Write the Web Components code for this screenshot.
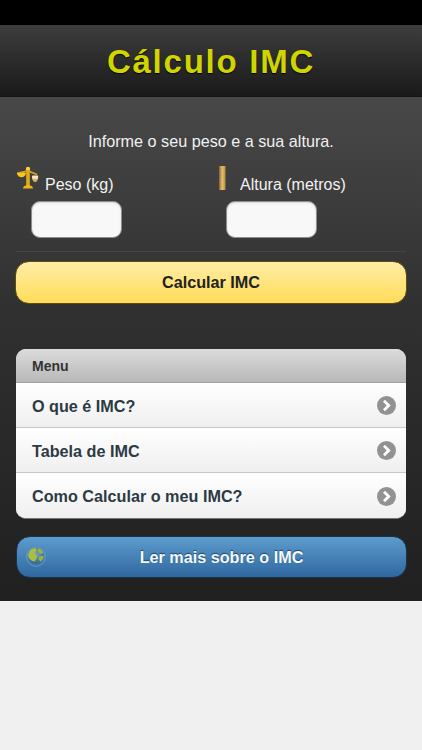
<!DOCTYPE html>
<html lang="pt">
<head>
<meta charset="utf-8">
<title>Cálculo IMC</title>
<style>
html, body { margin: 0; padding: 0; background: #f0f0f0; }
body { font-family: "Liberation Sans", Arial, sans-serif; width: 422px; height: 750px; overflow: hidden; }
</style>
</head>
<body>

<imc-app>
  <imc-header>Cálculo IMC</imc-header>
  <imc-intro>Informe o seu peso e a sua altura.</imc-intro>
  <imc-fields>
    <imc-field label="Peso (kg)">
      <svg slot="icon" width="24" height="24" viewBox="0 0 24 24" style="margin:-1px 0 0 -1px">
        <path d="M13 2.500v18" stroke="#e0ad18" stroke-width="3.600" fill="none"/>
        <circle cx="13" cy="3" r="2.200" fill="#f6d23e"/>
        <path d="M2 7.500 13 5l9 3.500" stroke="#d9a516" stroke-width="1.800" fill="none"/>
        <path d="M8 22.500c0-2.200 2-3.200 5-3.200s5 1 5 3.200z" fill="#eab716"/>
        <path d="M2 7h9c-.4 3-2.500 4.200-4.500 4.200S2.400 10 2 7z" fill="#f5c81c"/>
        <path d="M17 10h6.200c.2 3.600-1.200 6-3.100 6S16.800 13.600 17 10z" fill="#d8b45a"/>
        <path d="M17.200 9.500h5.800v3.200h-5.800z" fill="#f2e8d0"/>
      </svg>
    </imc-field>
    <imc-field label="Altura (metros)">
      <svg slot="icon" width="7" height="24" viewBox="0 0 7 24" style="margin:-1px 0 0 8px">
        <defs><linearGradient id="r" x1="0" x2="1" y1="0" y2="0"><stop offset="0" stop-color="#b4853a"/><stop offset=".5" stop-color="#e2bd73"/><stop offset="1" stop-color="#b98a3c"/></linearGradient></defs>
        <rect x=".3" y="0" width="6.200" height="24" fill="url(#r)"/>
        <path d="M.3 3h2M.3 6h2M.3 9h2M.3 12h2M.3 15h2M.3 18h2M.3 21h2" stroke="#8c6224" stroke-width=".5"/>
      </svg>
    </imc-field>
  </imc-fields>
  <imc-rule></imc-rule>
  <imc-button kind="yellow">Calcular IMC</imc-button>
  <imc-menu title="Menu">
    <imc-menu-item>O que é IMC?</imc-menu-item>
    <imc-menu-item>Tabela de IMC</imc-menu-item>
    <imc-menu-item>Como Calcular o meu IMC?</imc-menu-item>
  </imc-menu>
  <imc-button kind="blue">
    <svg slot="icon" width="20" height="20" viewBox="0 0 20 20">
      <defs><radialGradient id="g" cx=".5" cy=".4" r=".65"><stop offset="0" stop-color="#7ba3bd"/><stop offset="1" stop-color="#2f6288"/></radialGradient></defs>
      <circle cx="10" cy="10" r="9.300" fill="none" stroke="#8dbce0" stroke-opacity=".6" stroke-width=".8"/>
      <circle cx="10" cy="8.800" r="8" fill="url(#g)"/>
      <path d="M2.200 7.500C3 3.500 6 1 9.500 .9l1.300 2.400-2 2 .8 2.700 1.600 1-1.200 3.300-1.500 2.300C5 14 1.800 11 2.200 7.500z" fill="#a9bf3e"/>
      <path d="M12 1.300c2.300.5 4.300 2.200 5.200 4.500l-2 1.200-2-1-1.700-2.700zM13 9.500l4.800-.7c0 2.400-1.200 4.700-3.300 6l-1.800-2.300z" fill="#9bb53a"/>
    </svg>
    Ler mais sobre o IMC
  </imc-button>
</imc-app>

<script>
function component(tag, css, html) {
    customElements.define(tag, class extends HTMLElement {
        constructor() {
            super()
            let sr = this.attachShadow({mode: 'open'})
            let attrs = name => this.getAttribute(name) || ''
            sr.innerHTML = `<style>${css}</style>` + html(attrs)
        }
    })
}

component('imc-app', `
:host {
  display: block;
  box-sizing: border-box;
  height: 601px;
  border-top: 25px solid #000;
  background: linear-gradient(#484848 72px, #303030 50%, #202020 100%);
}
main {
  display: flex;
  flex-direction: column;
  height: 100%;
}`, () => `<main><slot></slot></main>`)

component('imc-header', `
:host {
  display: block;
  height: 72px;
  box-sizing: border-box;
  background: linear-gradient(#3d3d3d, #1a1a1a);
  border-bottom: 1px solid #141414;
  text-align: center;
  font: bold 33px/73px "Liberation Sans", Arial, sans-serif;
  letter-spacing: 1.750px;
  color: #d0d500;
  text-shadow: 0 1px 1px #000;
}`, () => `<slot></slot>`)

component('imc-intro', `
:host {
  display: block;
  margin-top: 34px;
  text-align: center;
  font: 16.200px/20px "Liberation Sans", Arial, sans-serif;
  color: #f0f0f0;
}`, () => `<slot></slot>`)

component('imc-fields', `
:host {
  display: grid;
  grid-template-columns: 195px 195px;
  margin: 16px 16px 0;
}`, () => `<slot></slot>`)

component('imc-field', `
:host { display: block; }
.head {
  display: flex;
  height: 34px;
  align-items: flex-start;
  font: 16px/18px "Liberation Sans", Arial, sans-serif;
  color: #f2f2f2;
}
.icon { width: 29px; flex: none; }
.text { padding-top: 9px; }
.box {
  box-sizing: border-box;
  display: block;
  width: 91px;
  height: 37px;
  margin-left: 15px;
  border-radius: 9px;
  border: 1px solid #8e8e8e;
  background: #f8f8f8;
  box-shadow: inset 0 1px 2px #d8d8d8;
}`, a => `
<div class="head"><div class="icon"><slot name="icon"></slot></div><div class="text">${a('label')}</div></div>
<div class="box"></div>`)

component('imc-rule', `
:host {
  display: block;
  height: 1px;
  margin: 13px 16px 9px;
  background: #454545;
}`, () => ``)

component('imc-button', `
:host {
  display: block;
  position: relative;
  box-sizing: border-box;
  text-align: center;
  font: bold 16.200px/41px "Liberation Sans", Arial, sans-serif;
  border-radius: 14px;
}
:host([kind=yellow]) {
  height: 43px;
  margin: 0 15px;
  color: #222;
  background: linear-gradient(#ffeda6, #ffdc58);
  border: 1px solid #5f4c10;
}
:host([kind=blue]) {
  height: 42px;
  margin: 17px 15px 0 16px;
  padding-left: 20px;
  color: #f4f8fb;
  background: linear-gradient(#5e9ccd, #2f689f);
  border: 1px solid #17344f;
  text-shadow: 0 -1px 1px #1c4468;
}
.icon { position: absolute; left: 9px; top: 10px; line-height: 0; }`, () => `
<span class="icon"><slot name="icon"></slot></span><slot></slot>`)

component('imc-menu', `
:host {
  display: block;
  margin: 45px 16px 0;
  border-radius: 10px;
  overflow: hidden;
  border-bottom: 1px solid #777;
  background: #fff;
  font-family: "Liberation Sans", Arial, sans-serif;
}
.title {
  box-sizing: border-box;
  height: 34px;
  padding-left: 16px;
  font: bold 14px/34px "Liberation Sans", Arial, sans-serif;
  color: #333;
  background: linear-gradient(#dcdcdc, #b8b8b8);
  border-bottom: 1px solid #a0a0a0;
}`, a => `<div class="title">${a('title')}</div><slot></slot>`)

component('imc-menu-item', `
:host {
  display: flex;
  align-items: center;
  justify-content: space-between;
  box-sizing: border-box;
  height: 45px;
  padding: 1px 10px 0 16px;
  font: bold 16.200px/20px "Liberation Sans", Arial, sans-serif;
  color: #2c3a44;
  background: linear-gradient(#ffffff, #efefef);
  border-bottom: 1px solid #c8c8c8;
}
:host(:last-child) { border-bottom: 0; }
svg { display: block; flex: none; }`, () => `
<slot></slot>
<svg width="19" height="19" viewBox="0 0 19 19">
  <circle cx="9.500" cy="9.500" r="9.500" fill="#929292"/>
  <path d="M7 4.800 11.700 9.500 7 14.200" fill="none" stroke="#fff" stroke-width="2.800"/>
</svg>`)
</script>
</body>
</html>
